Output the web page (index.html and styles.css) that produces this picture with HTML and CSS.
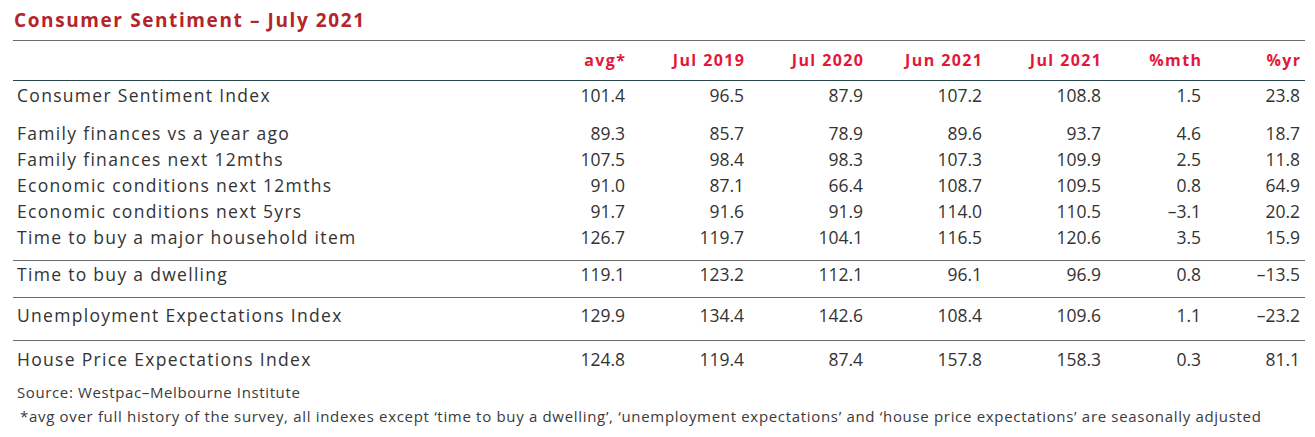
FILE: index.html
```html
<!DOCTYPE html>
<html lang="en">
<head>
<meta charset="utf-8">
<title>Consumer Sentiment – July 2021</title>
<link rel="stylesheet" href="styles.css">
</head>
<body>
<div class="report">
  <h1 class="title">Consumer Sentiment – July 2021</h1>
  <div class="table">
    <div class="row head">
      <span class="label"></span>
      <span>avg*</span><span>Jul 2019</span><span>Jul 2020</span><span>Jun 2021</span><span>Jul 2021</span><span>%mth</span><span>%yr</span>
    </div>
    <div class="group g-main">
      <div class="row">
        <span class="label">Consumer Sentiment Index</span>
        <span>101.4</span><span>96.5</span><span>87.9</span><span>107.2</span><span>108.8</span><span>1.5</span><span>23.8</span>
      </div>
    </div>
    <div class="group g-sub">
      <div class="row">
        <span class="label">Family finances vs a year ago</span>
        <span>89.3</span><span>85.7</span><span>78.9</span><span>89.6</span><span>93.7</span><span>4.6</span><span>18.7</span>
      </div>
      <div class="row">
        <span class="label">Family finances next 12mths</span>
        <span>107.5</span><span>98.4</span><span>98.3</span><span>107.3</span><span>109.9</span><span>2.5</span><span>11.8</span>
      </div>
      <div class="row">
        <span class="label">Economic conditions next 12mths</span>
        <span>91.0</span><span>87.1</span><span>66.4</span><span>108.7</span><span>109.5</span><span>0.8</span><span>64.9</span>
      </div>
      <div class="row">
        <span class="label">Economic conditions next 5yrs</span>
        <span>91.7</span><span>91.6</span><span>91.9</span><span>114.0</span><span>110.5</span><span>–3.1</span><span>20.2</span>
      </div>
      <div class="row">
        <span class="label">Time to buy a major household item</span>
        <span>126.7</span><span>119.7</span><span>104.1</span><span>116.5</span><span>120.6</span><span>3.5</span><span>15.9</span>
      </div>
    </div>
    <div class="group g-dwelling">
      <div class="row">
        <span class="label">Time to buy a dwelling</span>
        <span>119.1</span><span>123.2</span><span>112.1</span><span>96.1</span><span>96.9</span><span>0.8</span><span>–13.5</span>
      </div>
    </div>
    <div class="group g-unemp">
      <div class="row">
        <span class="label">Unemployment Expectations Index</span>
        <span>129.9</span><span>134.4</span><span>142.6</span><span>108.4</span><span>109.6</span><span>1.1</span><span>–23.2</span>
      </div>
    </div>
    <div class="group g-house">
      <div class="row">
        <span class="label">House Price Expectations Index</span>
        <span>124.8</span><span>119.4</span><span>87.4</span><span>157.8</span><span>158.3</span><span>0.3</span><span>81.1</span>
      </div>
    </div>
  </div>
  <p class="source">Source: Westpac–Melbourne Institute</p>
  <p class="note">*avg over full history of the survey, all indexes except ‘time to buy a dwelling’, ‘unemployment expectations’ and ‘house price expectations’ are seasonally adjusted</p>
</div>
</body>
</html>
```
FILE: styles.css
```css
html, body {
  margin: 0;
  padding: 0;
  background: #ffffff;
}

body {
  font-family: "Open Sans", "Liberation Sans", sans-serif;
  color: #333333;
}

.report {
  width: 1292px;
  margin-left: 13px;
}

.title {
  margin: 0;
  padding-left: 1px;
  font-size: 19px;
  font-weight: 700;
  line-height: 40px;
  letter-spacing: 1.6px;
  color: #b3242b;
  border-bottom: 1px solid #6b6b6b;
}

.row {
  display: grid;
  grid-template-columns: 493px repeat(5, 119px) 100px 99px;
  align-items: center;
  height: 26px;
  font-size: 17.5px;
  line-height: 26px;
  white-space: nowrap;
}

.row > span {
  text-align: right;
}

.row > .label {
  text-align: left;
  padding-left: 4px;
  letter-spacing: 1.3px;
}

.head {
  height: 39px;
  line-height: 39px;
  font-size: 16px;
  font-weight: 700;
  letter-spacing: 1.4px;
  color: #e3173a;
  border-bottom: 1px solid #27464d;
}

.head > span {
  margin-right: -1.4px;
}

.g-main .row {
  height: 28px;
  line-height: 28px;
}

.g-sub {
  padding-top: 11px;
  padding-bottom: 10px;
  border-bottom: 1px solid #6b6b6b;
}

.g-dwelling {
  padding-bottom: 10px;
  border-bottom: 1px solid #6b6b6b;
}

.g-unemp {
  padding-top: 4px;
  padding-bottom: 12px;
  border-bottom: 1px solid #6b6b6b;
}

.g-house {
  padding-top: 5px;
}

.source,
.note {
  margin: 0;
  font-size: 15px;
  line-height: 20px;
  color: #3a3a3a;
}

.source {
  margin-top: 10px;
  padding-left: 4px;
  letter-spacing: 0.62px;
}

.note {
  margin-top: 4px;
  padding-left: 7px;
  letter-spacing: 0.68px;
}
```
